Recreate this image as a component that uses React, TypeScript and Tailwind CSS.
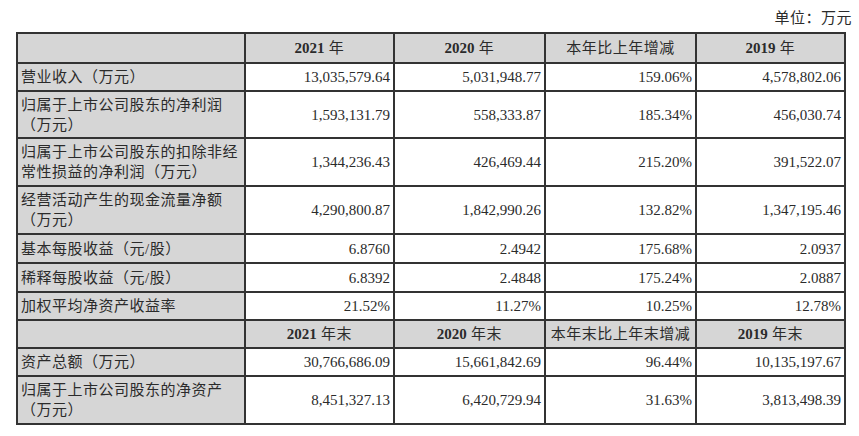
import React from "react";

type Row = { label: React.ReactNode; vals: string[]; h: string; header?: boolean };

const rows: Row[] = [
  { label: "", vals: ["2021 年", "2020 年", "本年比上年增减", "2019 年"], h: "h-[28px]", header: true },
  { label: "营业收入（万元）", vals: ["13,035,579.64", "5,031,948.77", "159.06%", "4,578,802.06"], h: "h-[26px]" },
  { label: <>归属于上市公司股东的净利润<br />（万元）</>, vals: ["1,593,131.79", "558,333.87", "185.34%", "456,030.74"], h: "h-[45px]" },
  { label: <>归属于上市公司股东的扣除非经<br />常性损益的净利润（万元）</>, vals: ["1,344,236.43", "426,469.44", "215.20%", "391,522.07"], h: "h-[46px]" },
  { label: <>经营活动产生的现金流量净额<br />（万元）</>, vals: ["4,290,800.87", "1,842,990.26", "132.82%", "1,347,195.46"], h: "h-[46px]" },
  { label: "基本每股收益（元/股）", vals: ["6.8760", "2.4942", "175.68%", "2.0937"], h: "h-[27px]" },
  { label: "稀释每股收益（元/股）", vals: ["6.8392", "2.4848", "175.24%", "2.0887"], h: "h-[27px]" },
  { label: "加权平均净资产收益率", vals: ["21.52%", "11.27%", "10.25%", "12.78%"], h: "h-[26px]" },
  { label: "", vals: ["2021 年末", "2020 年末", "本年末比上年末增减", "2019 年末"], h: "h-[26px]", header: true },
  { label: "资产总额（万元）", vals: ["30,766,686.09", "15,661,842.69", "96.44%", "10,135,197.67"], h: "h-[26px]" },
  { label: <>归属于上市公司股东的净资产<br />（万元）</>, vals: ["8,451,327.13", "6,420,729.94", "31.63%", "3,813,498.39"], h: "h-[46px]" },
];

function HeaderText({ v }: { v: string }) {
  const idx = v.indexOf(" ");
  if (idx < 0) return <span className="tracking-[0.5px]">{v}</span>;
  return (
    <span>
      <span className="font-bold">{v.slice(0, idx)}</span>
      <span className="tracking-[0.5px]">{v.slice(idx)}</span>
    </span>
  );
}

export default function App() {
  return (
    <div
      className="w-[859px] h-[436px] bg-white text-[#2b2b2b] overflow-hidden"
      style={{ fontFamily: "'Liberation Serif', 'Noto Sans CJK SC', serif" }}
    >
      <div className="h-[32px] flex items-start justify-end pr-[7px] pt-[9px] text-[15px] leading-[18px] tracking-[0.5px]">
        单位：万元
      </div>
      <div className="ml-[16px] w-[830px] bg-[#333] p-[2px] grid grid-cols-[226px_147px_149px_149px_147px] gap-[2px] text-[15px] leading-[20px]">
        {rows.map((r, i) => (
          <React.Fragment key={i}>
            <div className={`${r.h} bg-[#d6d6d6] flex items-center pl-[3px] tracking-[0.5px] whitespace-nowrap`}>
              <div>{r.label}</div>
            </div>
            {r.vals.map((v, j) => (
              <div
                key={j}
                className={`${r.h} ${
                  r.header ? "bg-[#d6d6d6] justify-center" : "bg-white justify-end pr-[3px]"
                } flex items-center whitespace-nowrap`}
              >
                {r.header ? <HeaderText v={v} /> : v}
              </div>
            ))}
          </React.Fragment>
        ))}
      </div>
    </div>
  );
}
